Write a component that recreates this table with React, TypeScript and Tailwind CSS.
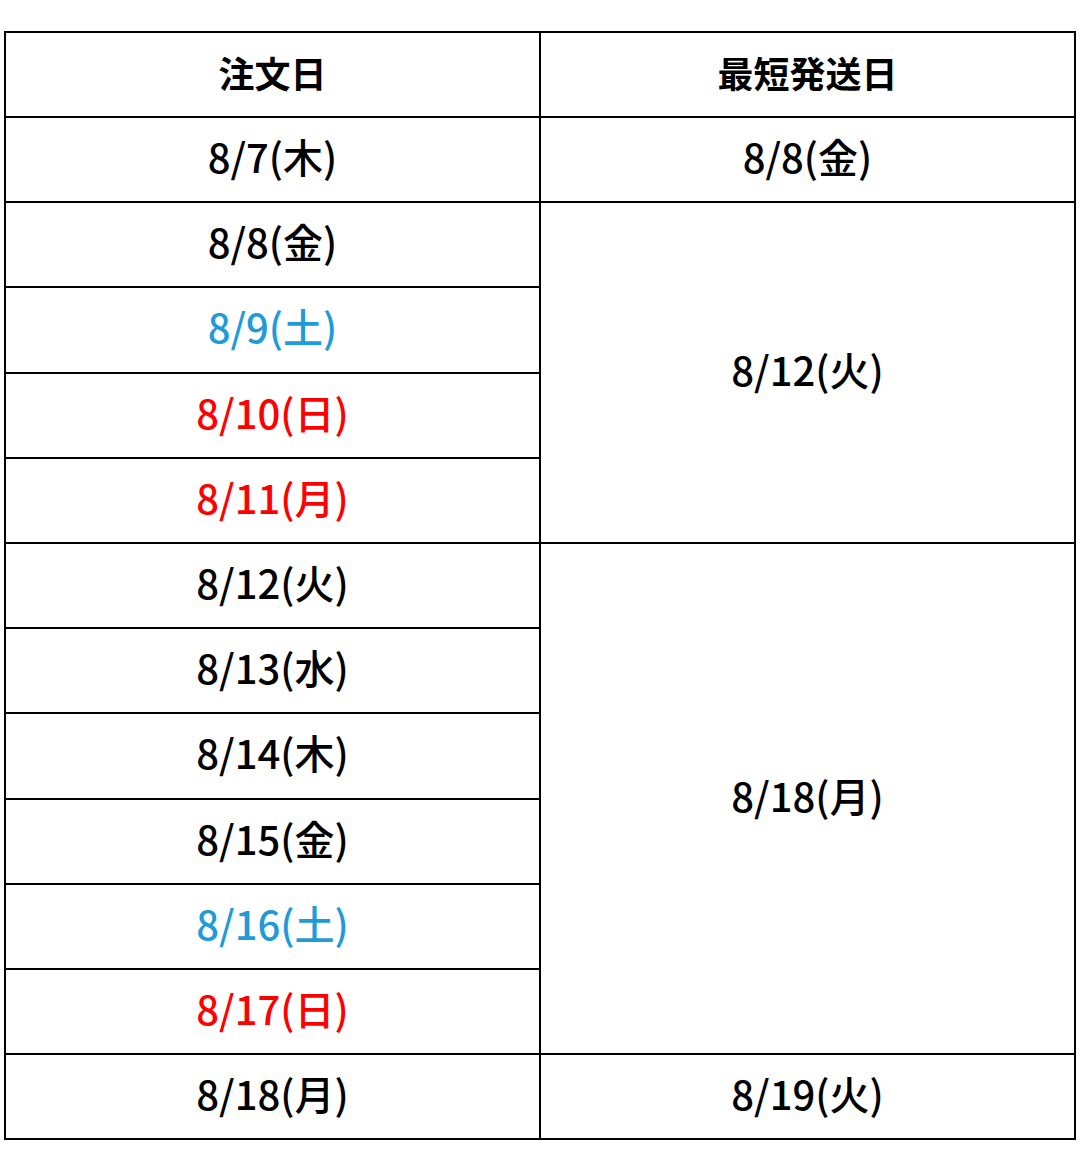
const rows: { order: string; color?: string }[] = [
  { order: "8/7(木)" },
  { order: "8/8(金)" },
  { order: "8/9(土)", color: "text-[#1f9bd7]" },
  { order: "8/10(日)", color: "text-[#ff0000]" },
  { order: "8/11(月)", color: "text-[#ff0000]" },
  { order: "8/12(火)" },
  { order: "8/13(水)" },
  { order: "8/14(木)" },
  { order: "8/15(金)" },
  { order: "8/16(土)", color: "text-[#1f9bd7]" },
  { order: "8/17(日)", color: "text-[#ff0000]" },
  { order: "8/18(月)" },
];

// shipping column: label + which grid rows it covers
const ship = [
  { label: "8/8(金)", cls: "row-start-2 row-span-1" },
  { label: "8/12(火)", cls: "row-start-3 row-span-4" },
  { label: "8/18(月)", cls: "row-start-7 row-span-6" },
  { label: "8/19(火)", cls: "row-start-13 row-span-1" },
];

const cell = "bg-white flex items-center justify-center";

export default function App() {
  return (
    <div
      className="min-h-[1152px] bg-white pt-[31px] pl-[4px]"
      style={{ fontFamily: '"Noto Sans CJK JP", "Noto Sans", sans-serif' }}
    >
      <div className="grid w-[1072px] grid-cols-[533px_533px] grid-rows-[83px_83px_83px_84px_83px_83px_83px_83px_84px_83px_83px_83px_83px] gap-[2px] bg-black p-[2px] text-black">
        <div className={`${cell} col-start-1 row-start-1 pb-[6px] text-[36px] font-bold`}>注文日</div>
        <div className={`${cell} col-start-2 row-start-1 pb-[6px] text-[36px] font-bold`}>最短発送日</div>
        {rows.map((r, i) => (
          <div
            key={r.order}
            className={`${cell} col-start-1 pb-[8px] text-[40px] font-medium ${r.color ?? ""}`}
            style={{ gridRowStart: i + 2 }}
          >
            {r.order}
          </div>
        ))}
        {ship.map((s) => (
          <div key={s.label} className={`${cell} col-start-2 pb-[8px] text-[40px] font-medium ${s.cls}`}>
            {s.label}
          </div>
        ))}
      </div>
    </div>
  );
}
